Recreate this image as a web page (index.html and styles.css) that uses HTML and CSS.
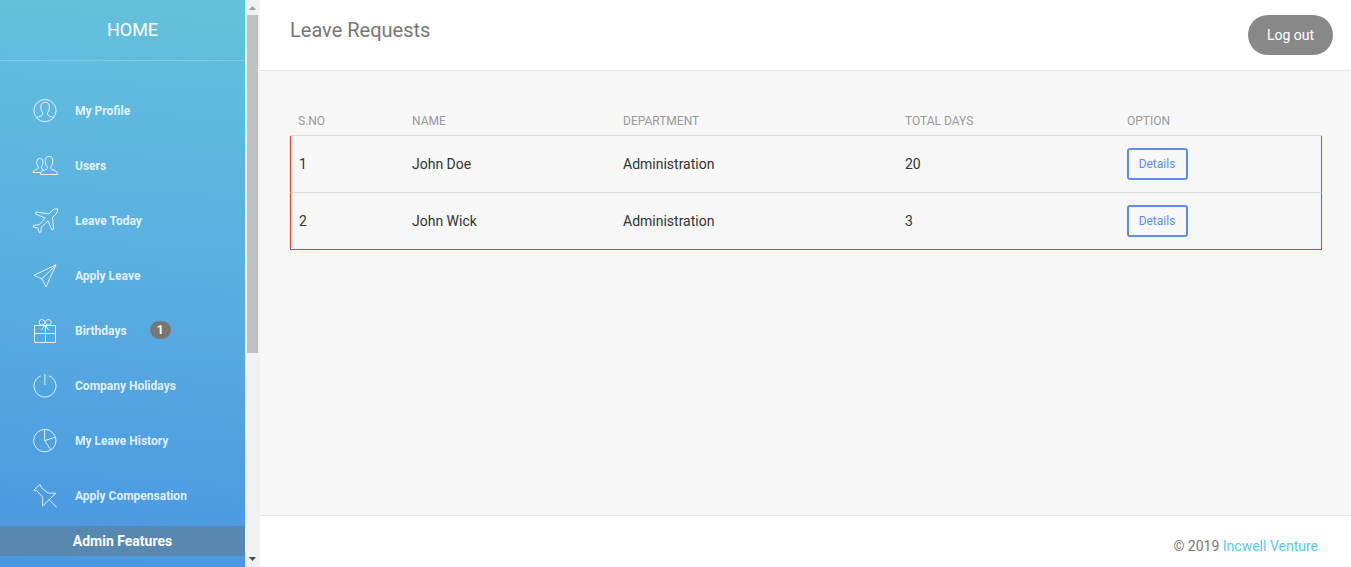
FILE: index.html
```html
<!DOCTYPE html>
<html lang="en">
<head>
<meta charset="utf-8">
<title>Leave Requests</title>
<link rel="stylesheet" href="styles.css">
</head>
<body>
<div class="app">
  <aside class="sidebar">
    <div class="logo">HOME</div>
    <nav class="nav">
      <a class="item"><svg class="icon" viewBox="0 0 28 28"><circle cx="14" cy="13.6" r="11.1"/><path d="M5.6 20.6 Q7 19.8 9.5 19.2 Q11.6 18.7 11.6 17.5 V15.8 Q9.8 14 9.8 9.8 Q9.8 5.3 14.1 5.3 Q18.4 5.3 18.4 9.8 Q18.4 14 16.6 15.8 V17.5 Q16.6 18.7 18.7 19.2 Q21.2 19.8 22.4 20.6"/></svg><span>My Profile</span></a>
      <a class="item"><svg class="icon" viewBox="0 0 28 28"><path d="M9.5 22.5 V21 Q9.8 18.8 13 18.2 Q16.2 17.6 16.2 16.7 V14.7 Q14.2 12.8 14.2 9 Q14.2 4.4 18 4.4 Q21.8 4.4 21.8 9 Q21.8 12.8 20 14.7 V16.7 Q20 17.6 23 18.2 Q26.5 18.9 26.7 22.5 Z"/><path d="M9.3 20.5 H2 Q1.9 18.6 4.7 17.7 Q7.2 17.1 7.2 16.3 V14.7 Q5.7 13.2 5.7 10.2 Q5.7 6.4 8.9 6.4 Q12 6.4 12 10.2 Q12 13.2 10.5 14.7 V16.3 Q10.5 17.1 12.6 17.8"/></svg><span>Users</span></a>
      <a class="item"><svg class="icon" viewBox="0 0 28 28"><path d="M26.3 1.8 Q23.6 1.4 21.6 3.2 L17.8 7 L5.3 4.9 L4.3 6.9 L14.2 11 L8 17.8 L2.7 18.2 L2 19.9 L6.8 21 L8.3 25.7 L9.9 25 L10.3 20.3 L17 13.9 L21 23 L22.8 21.8 L21.4 10.6 L25.2 6.8 Q27 4.8 26.3 1.8 Z"/></svg><span>Leave Today</span></a>
      <a class="item"><svg class="icon" viewBox="0 0 28 28"><path d="M25 2.8 L3 13.3 L10.9 16.8 L15.1 24.7 Z L10.9 16.8"/></svg><span>Apply Leave</span></a>
      <a class="item"><svg class="icon" viewBox="0 0 28 28"><path d="M3.5 8.5 H24.5 V25.5 H3.5 Z M3.5 16.5 H24.5 M14.5 8.5 V25.5 M14 8 L10.5 13 M14.5 8 L17.5 13"/><circle cx="10.9" cy="5.3" r="2.8"/><circle cx="17.4" cy="5.3" r="2.8"/></svg><span>Birthdays</span><span class="badge">1</span></a>
      <a class="item"><svg class="icon" viewBox="0 0 28 28"><path d="M9.9 3.8 A11 11 0 1 0 18.1 3.8 M13.9 2 V13"/></svg><span>Company Holidays</span></a>
      <a class="item"><svg class="icon" viewBox="0 0 28 28"><circle cx="13.8" cy="13.6" r="11.2"/><path d="M13.7 2.4 V13.7 L23.9 10.3 M13.7 13.7 L19.8 22.9"/></svg><span>My Leave History</span></a>
      <a class="item"><svg class="icon" viewBox="0 0 28 28"><path d="M9 2.4 L2.8 8.3 L5.9 8.8 L11.7 15.3 L11.6 24 L24.8 11.3 L17 11 L10.3 5.7 Z M18.3 18 L25.7 25.2"/></svg><span>Apply Compensation</span></a>
    </nav>
    <div class="section">Admin Features</div>
  </aside>
  <div class="scrollbar">
    <svg class="arrow" viewBox="0 0 15 15"><path d="M4 10h7L7.5 6z" fill="#a0a0a0"/></svg>
    <div class="thumb"></div>
    <svg class="arrow arrow-end" viewBox="0 0 15 15"><path d="M4 5h7L7.5 9z" fill="#484848"/></svg>
  </div>
  <div class="main">
    <header class="header"><h1 class="title">Leave Requests</h1><button class="logout">Log out</button></header>
    <main class="content">
      <table class="table">
        <colgroup><col class="c-no"><col class="c-name"><col class="c-dept"><col class="c-days"><col></colgroup>
        <thead><tr><th>S.NO</th><th>NAME</th><th>DEPARTMENT</th><th>TOTAL DAYS</th><th>OPTION</th></tr></thead>
        <tbody>
          <tr><td>1</td><td>John Doe</td><td>Administration</td><td>20</td><td><button class="details">Details</button></td></tr>
          <tr><td>2</td><td>John Wick</td><td>Administration</td><td>3</td><td><button class="details">Details</button></td></tr>
        </tbody>
      </table>
    </main>
    <footer class="footer">© 2019 <a class="brand">Incwell Venture</a></footer>
  </div>
</div>
</body>
</html>
```
FILE: styles.css
```css
* { box-sizing: border-box; }
body { margin: 0; font-family: Roboto, "Liberation Sans", sans-serif; font-size: 14px; color: #333; }
.app { display: flex; height: 567px; overflow: hidden; }
.sidebar { width: 245px; flex: none; color: #fff; background: linear-gradient(184deg, #65c1da 0%, #5fb8df 22%, #58ade0 52%, #4f9fe1 82%, #4896e1 100%); }
.logo { height: 61px; padding-left: 20px; border-bottom: 1px solid rgba(255,255,255,.2); font-size: 18px; line-height: 60px; text-align: center; }
.nav { padding-top: 22px; }
.item { display: flex; align-items: center; height: 55px; padding-left: 31px; font-size: 12px; font-weight: 700; color: rgba(255,255,255,.84); }
.icon { width: 28px; height: 28px; margin-right: 16px; fill: none; stroke: rgba(255,255,255,.8); stroke-width: 1; stroke-linejoin: round; }
.badge { width: 21px; height: 18px; margin: -2px 0 0 23px; border-radius: 9px; background: #777; color: #fff; line-height: 18px; text-align: center; }
.section { height: 30px; margin-top: 3px; background: #5888af; font-size: 14px; font-weight: 700; line-height: 30px; text-align: center; }
.scrollbar { display: flex; flex-direction: column; align-items: center; width: 15px; flex: none; background: #f1f1f1; }
.arrow { width: 15px; height: 15px; }
.arrow-end { margin-top: auto; }
.thumb { width: 11px; height: 338px; background: #c1c1c1; }
.main { display: flex; flex-direction: column; flex: 1; background: #f7f7f7; }
.header { display: flex; justify-content: space-between; align-items: flex-start; height: 71px; padding: 15px 18px 0 30px; border-bottom: 1px solid #e2e2e2; background: #fff; }
.title { margin: 0; font-size: 20px; font-weight: 400; line-height: 30px; color: #777; }
.logout { width: 85px; height: 40px; padding: 0; border: 0; border-radius: 20px; background: #888; color: #fff; font: 14px Roboto, sans-serif; }
.content { flex: 1; padding: 35px 29px 0 30px; }
.table { width: 1032px; table-layout: fixed; border-collapse: separate; border-spacing: 0; }
.c-no { width: 114px; }
.c-name { width: 211px; }
.c-dept { width: 282px; }
.c-days { width: 222px; }
.table th { height: 30px; padding: 0 8px; border-bottom: 1px solid #ddd; font-size: 12px; font-weight: 400; text-align: left; color: #999; }
.table td { height: 57px; padding: 0 8px; border-bottom: 1px solid #ddd; }
.table td:first-child { border-left: 1px solid #e53c2c; }
.table td:last-child { border-right: 1px solid #e53c2c; }
.table tr:last-child td { border-bottom-color: #e53c2c; }
.details { display: block; width: 61px; height: 32px; padding: 0 1px 0 0; border: 2px solid #5e8cf4; border-radius: 3px; background: transparent; color: #5e8cf4; font: 12px Roboto, sans-serif; }
.footer { height: 52px; padding: 20px 33px 0 0; border-top: 1px solid #e7e7e7; background: #fff; line-height: 20px; text-align: right; color: #777; }
.brand { color: #5bc7ea; }
```
